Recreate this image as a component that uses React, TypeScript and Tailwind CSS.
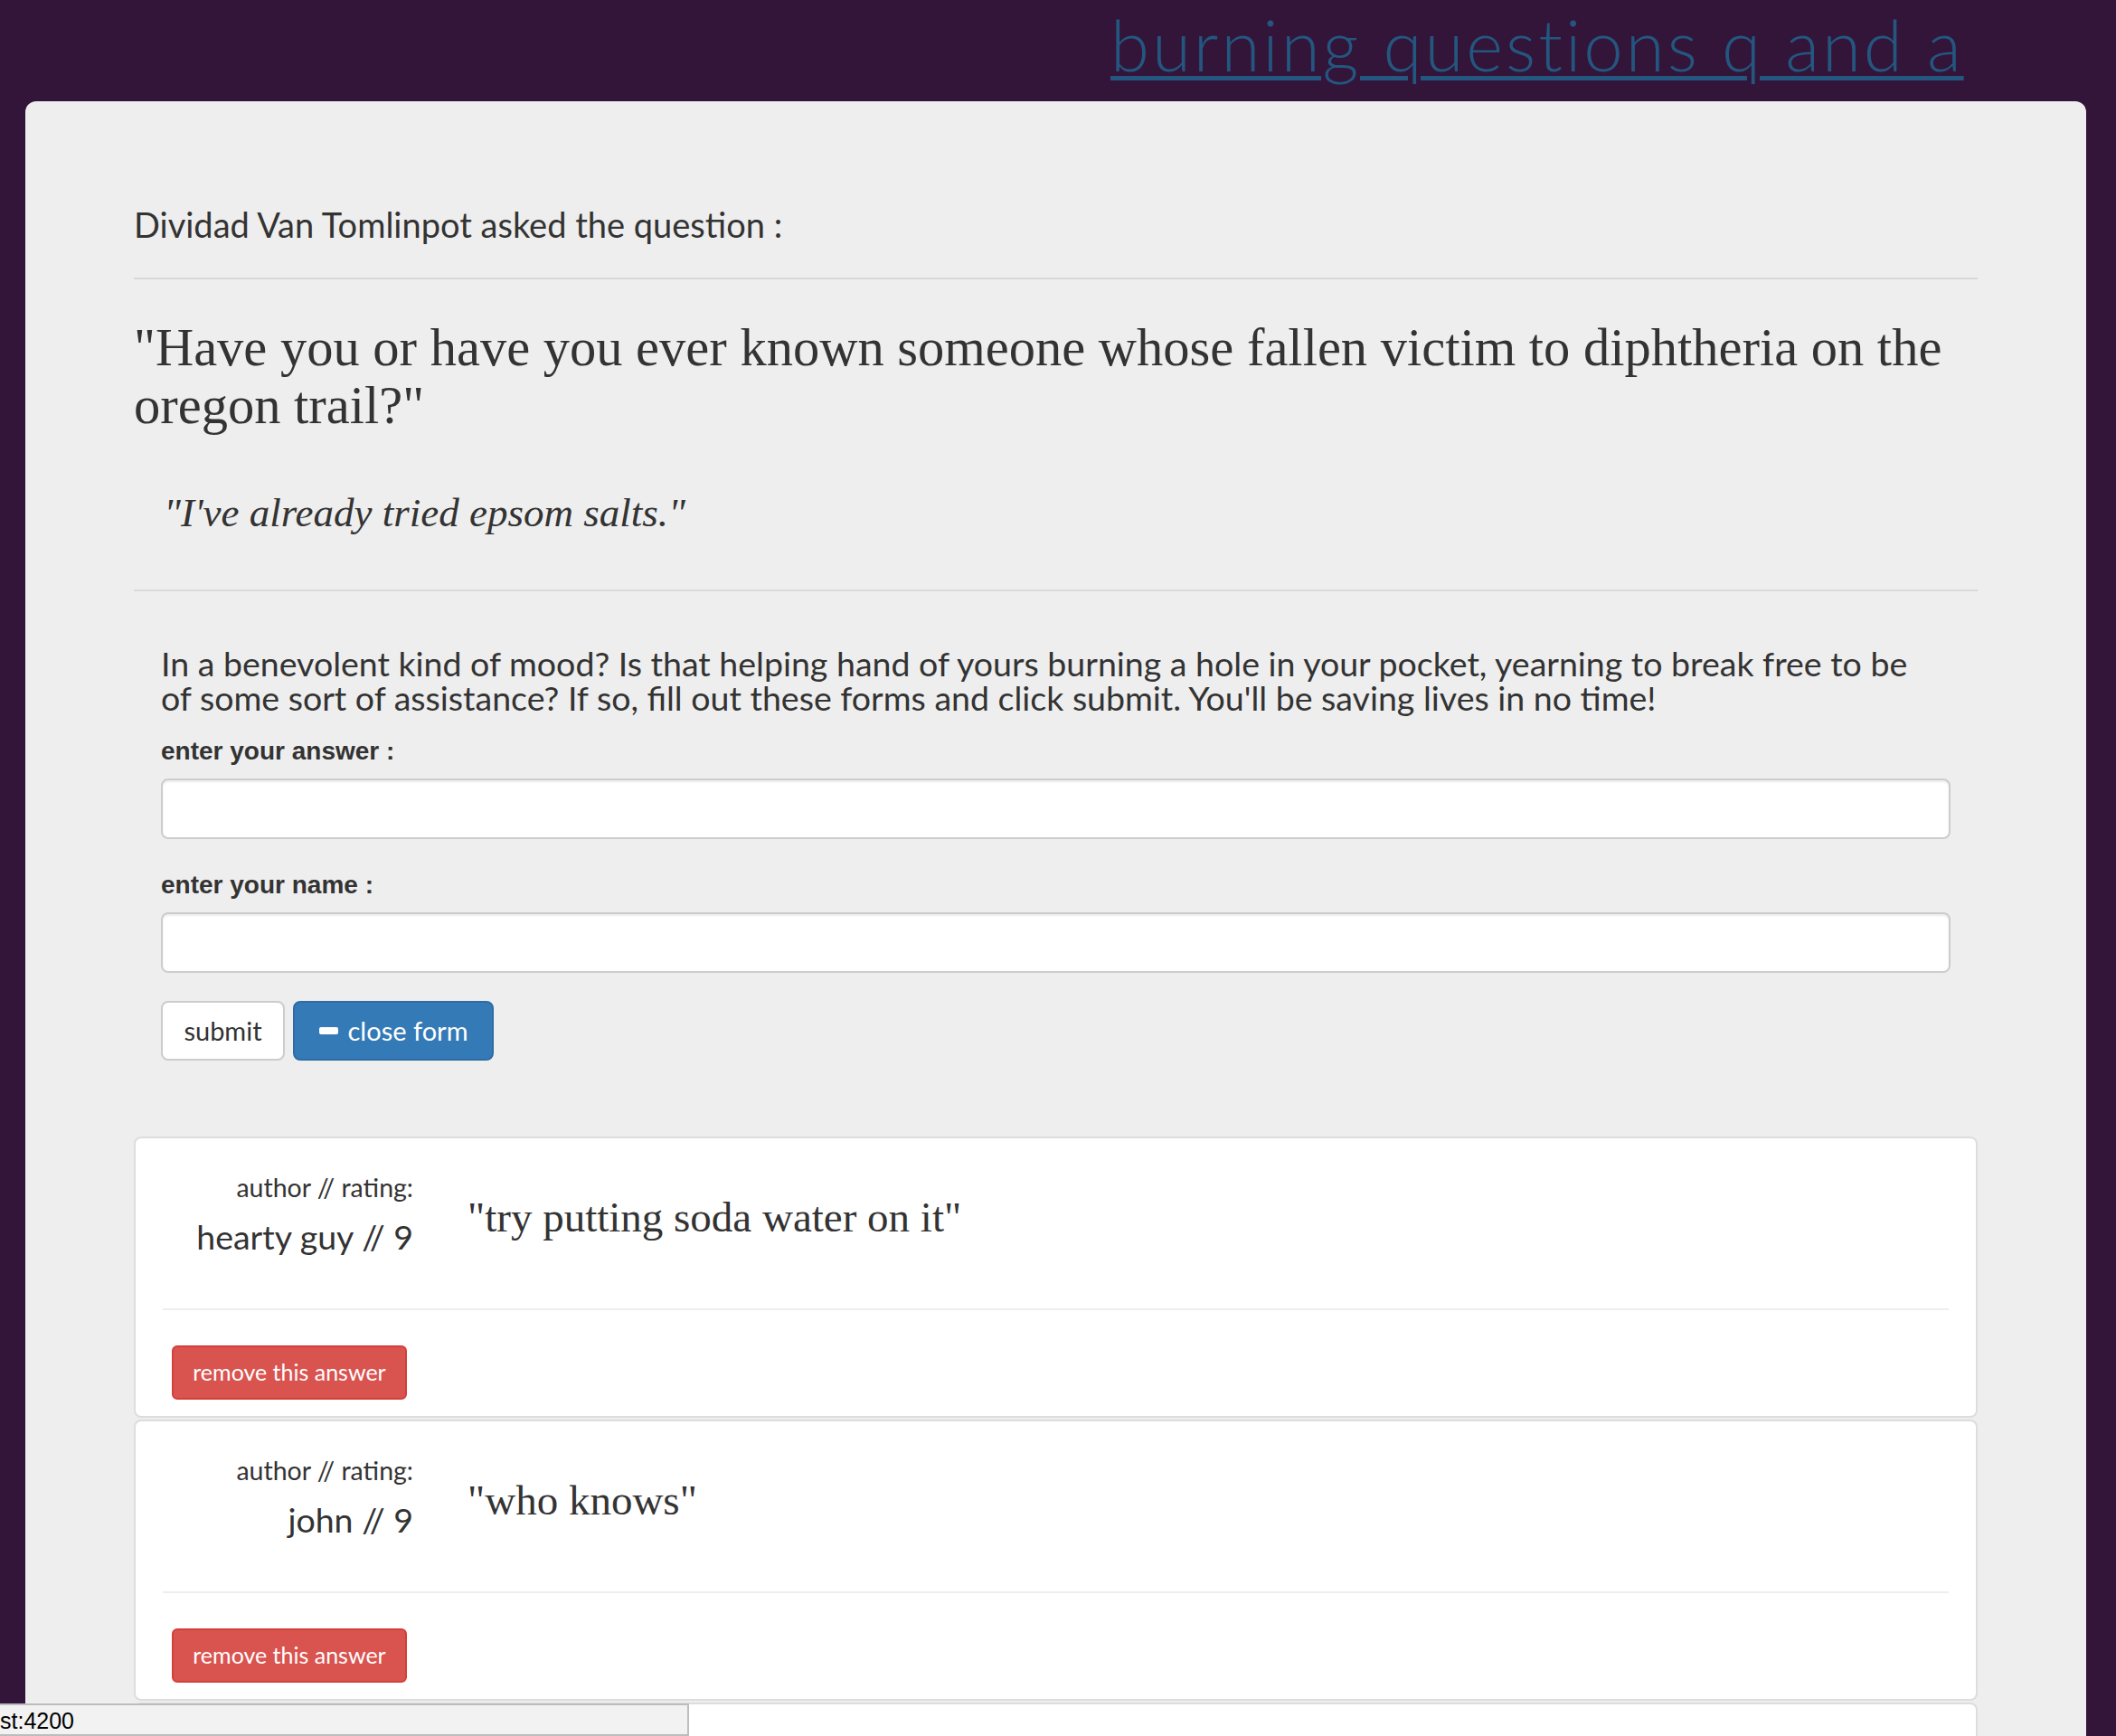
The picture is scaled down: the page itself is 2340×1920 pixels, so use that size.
import React from "react";

const sans = "[font-family:Lato,'Noto_Sans',sans-serif]";
const serif = "[font-family:'Liberation_Serif',serif]";

function AnswerCard({ author, rating, text }: { author: string; rating: number; text: string }) {
  return (
    <div className="mt-[2px] bg-white border-2 border-[#dddddd] rounded-[8px]">
      <div className="flex h-[188px]">
        <div className={`w-[307px] shrink-0 text-right text-[#333333] ${sans}`}>
          <div className="mt-[37px] text-[28.5px] leading-[34px]">author // rating:</div>
          <div className="mt-[16px] text-[37.5px] leading-[44px]">
            {author} // {rating}
          </div>
        </div>
        <div className={`ml-[60px] mt-[60px] text-[47px] leading-[54px] text-[#333333] ${serif}`}>
          "{text}"
        </div>
      </div>
      <div className="mx-[30px] h-[2px] bg-[#eeeeee]" />
      <div className="pl-[40px] pt-[39px] pb-[18px]">
        <button
          className={`h-[60px] w-[260px] rounded-[6px] border-2 border-[#d43f3a] bg-[#d9534f] text-white text-[25px] ${sans}`}
        >
          remove this answer
        </button>
      </div>
    </div>
  );
}

export default function App() {
  return (
    <div className="relative h-[1920px] w-full overflow-hidden bg-[#321539]">
      <header className="h-[112px] pl-[1228px]">
        <a
          href="#"
          className={`inline-block pt-[3px] pb-[6px] text-[78px] leading-[92px] tracking-[3px] font-light text-[#24567f] underline decoration-[5px] underline-offset-[5px] ${sans}`}
        >
          burning questions q and a
        </a>
      </header>

      <main className="ml-[28px] mr-[33px] rounded-t-[12px] bg-[#eeeeee] px-[120px] pt-[114px] pb-[40px]">
        <div className={`text-[38px] leading-[44px] text-[#333333] ${sans}`}>
          Dividad Van Tomlinpot asked the question :
        </div>
        <div className="mt-[37px] h-[2px] bg-[#d9d9d9]" />
        <h2 className={`mt-[44px] text-[58.5px] leading-[64px] text-[#333333] ${serif}`}>
          "Have you or have you ever known someone whose fallen victim to diphtheria on the oregon trail?"
        </h2>
        <p className={`mt-[60px] pl-[33px] text-[45px] leading-[52px] italic text-[#333333] ${serif}`}>
          "I've already tried epsom salts."
        </p>
        <div className="mt-[59px] h-[2px] bg-[#d9d9d9]" />

        <section className="px-[30px]">
          <p className={`mt-[61px] pr-[24px] text-[37.5px] leading-[38px] text-[#333333] ${sans}`}>
            In a benevolent kind of mood? Is that helping hand of yours burning a hole in your pocket, yearning to break
            free to be of some sort of assistance? If so, fill out these forms and click submit. You'll be saving lives in
            no time!
          </p>
          <label className="mt-[23px] block text-[28px] leading-[34px] font-bold text-[#333333] [font-family:'Liberation_Sans',Arial,sans-serif]">
            enter your answer :
          </label>
          <input
            type="text"
            className="mt-[13px] block h-[67px] w-full rounded-[8px] border-2 border-[#cccccc] bg-white shadow-[inset_0_2px_2px_rgba(0,0,0,0.075)] outline-none"
          />
          <label className="mt-[34px] block text-[28px] leading-[34px] font-bold text-[#333333] [font-family:'Liberation_Sans',Arial,sans-serif]">
            enter your name :
          </label>
          <input
            type="text"
            className="mt-[13px] block h-[67px] w-full rounded-[8px] border-2 border-[#cccccc] bg-white shadow-[inset_0_2px_2px_rgba(0,0,0,0.075)] outline-none"
          />
          <div className="mt-[31px] flex gap-[9px]">
            <button
              className={`h-[66px] w-[137px] rounded-[8px] border-2 border-[#cccccc] bg-white text-[29px] text-[#333333] ${sans}`}
            >
              submit
            </button>
            <button
              className={`flex h-[66px] w-[222px] items-center justify-center gap-[11px] rounded-[8px] border-2 border-[#2e6da4] bg-[#337ab7] text-[29px] text-white ${sans}`}
            >
              <span className="block h-[8px] w-[21px] rounded-[2px] bg-white" />
              <span>close form</span>
            </button>
          </div>
        </section>

        <div className="mt-[84px]">
          <AnswerCard author="hearty guy" rating={9} text="try putting soda water on it" />
          <AnswerCard author="john" rating={9} text="who knows" />
          <div className="mt-[2px] h-[311px] bg-white border-2 border-[#dddddd] rounded-[8px]" />
        </div>
      </main>

      <div className="absolute left-0 top-[1884px] h-[36px] w-[762px] border-2 border-l-0 border-[#bdbdbd] bg-[#f2f2f2] pt-[2px] text-[25px] leading-[30px] text-black [font-family:'Liberation_Sans',Arial,sans-serif]">
        st:4200
      </div>
    </div>
  );
}
